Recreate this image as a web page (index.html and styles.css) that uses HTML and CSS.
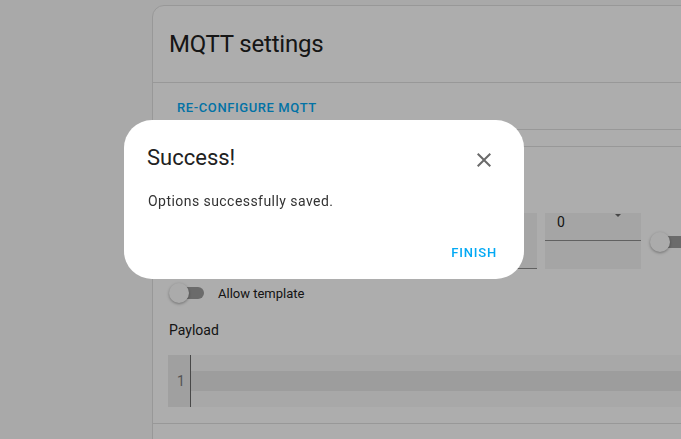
FILE: index.html
```html
<!DOCTYPE html>
<html lang="en">
<head>
<meta charset="utf-8">
<title>MQTT settings</title>
<link rel="stylesheet" href="styles.css">
</head>
<body>
<div class="page">
  <div class="card">
    <div class="card-header">MQTT settings</div>
    <div class="card-actions">
      <button class="text-btn">RE-CONFIGURE MQTT</button>
    </div>
    <div class="card-gap"></div>
    <div class="card-content">
      <div class="fields">
        <div class="field topic"></div>
        <div class="field qos">
          <div class="qos-top">
            <span class="qos-value">0</span>
            <span class="qos-arrow"></span>
          </div>
        </div>
        <div class="switch retain"><span class="thumb"></span></div>
      </div>
      <div class="toggle-row">
        <div class="switch"><span class="thumb"></span></div>
        <span class="toggle-label">Allow template</span>
      </div>
      <div class="payload-label">Payload</div>
      <div class="editor">
        <div class="gutter"><span class="lineno">1</span></div>
        <div class="lines"><div class="active-line"></div></div>
      </div>
    </div>
    <div class="card-rest"></div>
  </div>
</div>

<div class="scrim"></div>

<div class="dialog" role="dialog">
  <div class="dialog-head">
    <h2 class="dialog-title">Success!</h2>
    <button class="close-btn" aria-label="Close">
      <svg viewBox="0 0 24 24" width="24" height="24"><path d="M19 6.41 17.59 5 12 10.59 6.41 5 5 6.41 10.59 12 5 17.59 6.41 19 12 13.41 17.59 19 19 17.59 13.41 12z" fill="currentColor"/></svg>
    </button>
  </div>
  <p class="dialog-text">Options successfully saved.</p>
  <div class="dialog-actions">
    <button class="text-btn finish">FINISH</button>
  </div>
</div>
</body>
</html>
```

FILE: styles.css
```css
html, body {
  margin: 0;
  padding: 0;
}
body {
  width: 681px;
  height: 439px;
  overflow: hidden;
  background: #fafafa;
  font-family: Roboto, "Noto Sans", sans-serif;
  color: #212121;
}
.page {
  padding: 5px 0 0 152px;
}
.card {
  width: 640px;
  background: #fff;
  border: 1px solid #e0e0e0;
  border-radius: 12px;
}
.card-header {
  font-size: 24px;
  line-height: 32px;
  letter-spacing: -0.2px;
  padding: 22px 16px 22px 16px;
  border-bottom: 1px solid #e0e0e0;
}
.card-actions {
  height: 46px;
  padding: 0 16px;
  display: flex;
  align-items: center;
  border-bottom: 1px solid #e0e0e0;
}
.text-btn {
  background: none;
  border: none;
  font-family: Roboto, sans-serif;
  font-weight: 500;
  font-size: 13px;
  letter-spacing: 0.6px;
  color: #03a9f4;
  padding: 0 8px;
  height: 36px;
  cursor: pointer;
}
.card-actions .text-btn {
  margin-top: 2px;
}
.card-gap {
  height: 16px;
  border-bottom: 1px solid #e0e0e0;
}
.card-content {
  padding: 66px 16px 16px 15px;
  border-bottom: 1px solid #e0e0e0;
}
.fields {
  display: flex;
  height: 56px;
  gap: 8px;
}
.field {
  background: #f4f4f4;
  box-sizing: border-box;
}
.topic {
  width: 369px;
  border-bottom: 1px solid #8f8f8f;
}
.qos {
  width: 96px;
}
.qos-top {
  height: 28px;
  border-bottom: 1px solid #8f8f8f;
  box-sizing: border-box;
  display: flex;
  justify-content: space-between;
  padding: 0 20px 0 12px;
}
.qos-value {
  font-size: 14px;
  line-height: 16px;
  margin-top: 1px;
}
.qos-arrow {
  width: 0;
  height: 0;
  border-left: 3px solid transparent;
  border-right: 3px solid transparent;
  border-top: 3px solid #6b6b6b;
  margin-top: 1px;
}
.switch {
  position: relative;
  width: 36px;
  height: 24px;
  flex: none;
}
.switch::before {
  content: "";
  position: absolute;
  left: 10px;
  top: 6px;
  width: 26px;
  height: 12px;
  border-radius: 6px;
  background: #9e9e9e;
}
.switch .thumb {
  position: absolute;
  left: 1px;
  top: 2px;
  width: 20px;
  height: 20px;
  border-radius: 50%;
  background: #fcfcfc;
  box-shadow: 0 1px 3px rgba(0, 0, 0, 0.35);
}
.retain {
  margin-top: 17px;
  width: 60px;
}
.retain::before {
  width: 50px;
}
.toggle-row {
  display: flex;
  align-items: center;
  height: 24px;
  margin-top: 12px;
}
.toggle-label {
  font-size: 13px;
  margin-left: 14px;
}
.payload-label {
  font-size: 14px;
  line-height: 20px;
  margin-top: 15px;
  margin-left: 1px;
}
.editor {
  margin-top: 15px;
  height: 52px;
  display: flex;
  background: #f8f8f8;
}
.gutter {
  width: 22px;
  background: #ececec;
  border-right: 1px solid #6a6a6a;
  position: relative;
}
.lineno {
  position: absolute;
  left: 9px;
  top: 17px;
  font-size: 14px;
  line-height: 18px;
  color: #7d7d7d;
}
.lines {
  flex: 1;
  padding-top: 16px;
}
.active-line {
  height: 20px;
  background: #e8e8e8;
}
.card-rest {
  height: 40px;
}

.scrim {
  position: fixed;
  inset: 0;
  background: rgba(0, 0, 0, 0.32);
}
.dialog {
  position: fixed;
  left: 124px;
  top: 120px;
  width: 400px;
  height: 159px;
  box-sizing: border-box;
  background: #fff;
  border-radius: 28px;
  padding: 24px 28px 0 23px;
  display: flex;
  flex-direction: column;
}
.dialog-head {
  display: flex;
  justify-content: space-between;
  align-items: flex-start;
}
.dialog-title {
  margin: 0;
  font-size: 22px;
  font-weight: 400;
  line-height: 28px;
  color: #212121;
}
.close-btn {
  background: none;
  border: none;
  padding: 0;
  width: 24px;
  height: 24px;
  margin-top: 4px;
  color: #6a6a6a;
}
.close-btn svg {
  display: block;
}
.dialog-text {
  margin: 19px 0 0 1px;
  font-size: 14px;
  line-height: 20px;
  letter-spacing: 0.45px;
  color: #333;
}
.dialog-actions {
  margin-top: auto;
  display: flex;
  justify-content: flex-end;
  padding-bottom: 9px;
  margin-right: -9px;
}
.finish {
  letter-spacing: 0.8px;
}
```
